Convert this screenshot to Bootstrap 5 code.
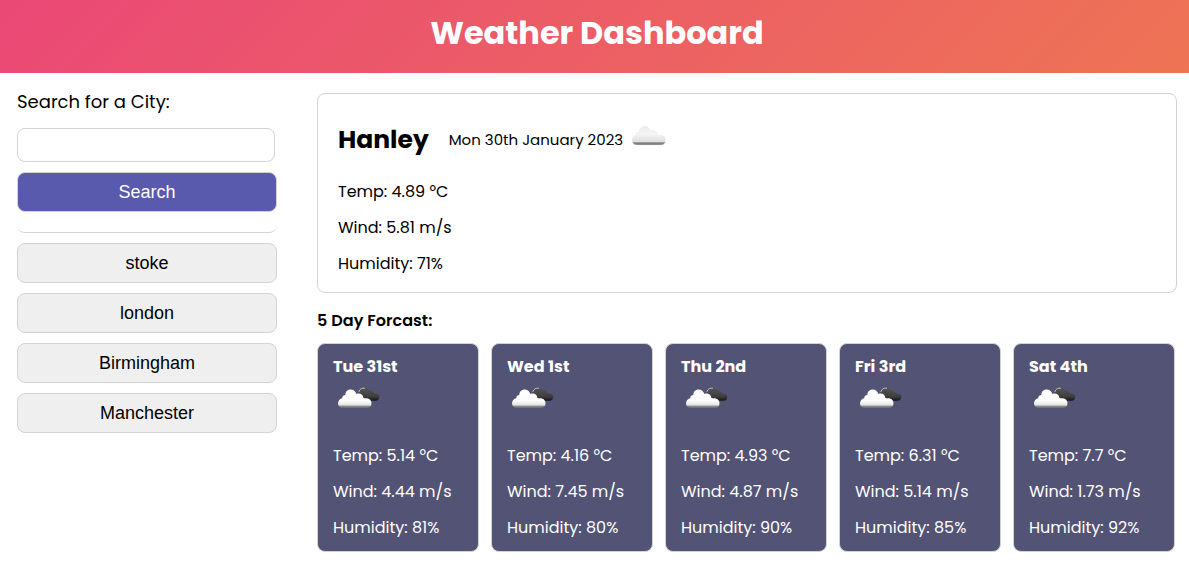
<!DOCTYPE html>
<html lang="en">
<head>
<meta charset="utf-8">
<meta name="viewport" content="width=device-width, initial-scale=1">
<title>Weather Dashboard</title>
<link href="https://cdn.jsdelivr.net/npm/bootstrap@5.3.0/dist/css/bootstrap.min.css" rel="stylesheet">
<style>
  body { font-family: Poppins, Inter, sans-serif; color: #000; background: #fff; font-size: 16px; }
  .hero { height: 73px; padding-top: 9px; background: linear-gradient(135deg, #ea4876, #ee7454); }
  .hero h1 { font-size: 32px; font-weight: 700; line-height: 48px; padding-left: 5px; }
  .layout { padding: 15px 12px 0 17px; gap: 40px; }
  .sidebar { width: 260px; }
  .search-label { font-size: 18px; font-weight: 400; line-height: 28px; margin-bottom: 12px; }
  .search-box { width: 258px; height: 34px; border: 1px solid #d3d3d3; border-radius: 8px; margin-bottom: 10px; }
  .city-btn { --bs-btn-bg: #efefef; --bs-btn-color: #000; --bs-btn-border-color: #d3d3d3; --bs-btn-border-radius: 8px;
    height: 40px; padding: 0; font: 18px/38px "Liberation Sans", Arial, sans-serif; }
  .go-btn { --bs-btn-bg: #5959ae; --bs-btn-color: #fff; }
  .city-list { gap: 10px; }
  .divider { height: 21px; border-bottom: 1px solid #d3d3d3; border-radius: 8px; margin-bottom: 10px; }
  .today { height: 200px; margin-top: 5px; padding: 28px 20px 0; border: 1px solid #d3d3d3; border-radius: 8px; }
  .today h2 { font-size: 25px; font-weight: 700; line-height: 36px; margin: 0 20px 0 0; }
  .today-date { font-size: 15px; font-weight: 400; }
  .today-icon { margin: -8px 0 0 9px; }
  .reading { line-height: 24px; margin-bottom: 12px; white-space: nowrap; }
  .readings { margin-top: 22px; }
  .forecast-title { font-size: 16px; font-weight: 600; line-height: 24px; letter-spacing: .05px; margin: 16px 0 10px; }
  .forecast { gap: 12px; }
  .day { width: 162px; height: 209px; padding: 11px 15px 0; border: 1px solid #d3d3d3; border-radius: 8px; background: #535375; color: #fff; }
  .day h4 { font-size: 16px; font-weight: 700; line-height: 24px; margin: 0 0 8px; }
  .day svg { margin: 0 0 35px 5px; }
</style>
</head>
<body>
<svg width="0" height="0" class="position-absolute" aria-hidden="true">
  <defs>
    <linearGradient id="white" x1="0" y1="0" x2="0" y2="1">
      <stop offset="0" stop-color="#fff"/><stop offset=".6" stop-color="#fdfdfd"/><stop offset=".84" stop-color="#e4e4e4"/><stop offset=".9" stop-color="#8c8c8c"/><stop offset="1" stop-color="#6c6c6c"/>
    </linearGradient>
    <linearGradient id="pale" x1="0" y1="0" x2="0" y2="1">
      <stop offset="0" stop-color="#ececec"/><stop offset=".4" stop-color="#f6f6f6"/><stop offset=".83" stop-color="#dedede"/><stop offset=".88" stop-color="#858585"/><stop offset="1" stop-color="#777"/>
    </linearGradient>
    <linearGradient id="dark" x1="0" y1="0" x2="0" y2="1">
      <stop offset="0" stop-color="#555"/><stop offset=".7" stop-color="#3d3d3d"/><stop offset="1" stop-color="#151515"/>
    </linearGradient>
    <path id="cloud" d="M5 19C2 19 0 17 0 14.500C0 11.500 2 9.700 4.300 9.200C4 7.500 5.500 6 7.300 6C7.300 2.800 9.500 .5 12.500 .5C15.500 .5 17.700 2.300 18.300 5C22 3.500 25.200 5.500 25.300 8.800C26 9.300 27 9.300 28 9.300C31.500 9.300 33.500 11.500 33.500 14.500C33.500 17.300 31.500 19 29 19Z"/>
    <symbol id="cloudy" viewBox="0 0 34 20"><use href="#cloud" fill="url(#pale)" stroke="#e0e0e0" stroke-width=".4"/></symbol>
    <symbol id="broken" viewBox="0 0 42 22">
      <path d="M21 8C20 3 23 .7 26 .7C29 .7 30 2 31 3.500C33.500 2.500 35.500 4.500 35.800 6.500C39 6 41.300 7.500 41.300 10C41.300 12.500 39.500 13.700 37.500 13.700H27Z" fill="url(#dark)"/>
      <path d="M20.800 5C21.500 2 24 .7 27 1.200" fill="none" stroke="#bbb" stroke-width="1"/>
      <use href="#cloud" y="2" fill="url(#white)"/>
    </symbol>
  </defs>
</svg>

<header class="hero text-center text-white"><h1 class="m-0">Weather Dashboard</h1></header>

<main class="layout d-flex">
  <aside class="sidebar flex-shrink-0">
    <label class="search-label d-block" for="city">Search for a City:</label>
    <input id="city" class="search-box d-block" type="text">
    <button class="btn city-btn go-btn w-100 d-block">Search</button>
    <div class="divider"></div>
    <div class="d-grid city-list">
      <button class="btn city-btn">stoke</button>
      <button class="btn city-btn">london</button>
      <button class="btn city-btn">Birmingham</button>
      <button class="btn city-btn">Manchester</button>
    </div>
  </aside>

  <div class="flex-grow-1">
    <section class="today">
      <div class="d-flex align-items-center">
        <h2>Hanley</h2><span class="today-date">Mon 30th January 2023</span>
        <svg class="today-icon" width="34" height="20"><use href="#cloudy"/></svg>
      </div>
      <div class="readings">
        <div class="reading">Temp: 4.89 °C</div>
        <div class="reading">Wind: 5.81 m/s</div>
        <div class="reading">Humidity: 71%</div>
      </div>
    </section>
    <h3 class="forecast-title">5 Day Forcast:</h3>
    <section class="forecast d-flex">
      <article class="day"><h4>Tue 31st</h4><svg class="d-block" width="42" height="22"><use href="#broken"/></svg>
        <div class="reading">Temp: 5.14 °C</div><div class="reading">Wind: 4.44 m/s</div><div class="reading">Humidity: 81%</div></article>
      <article class="day"><h4>Wed 1st</h4><svg class="d-block" width="42" height="22"><use href="#broken"/></svg>
        <div class="reading">Temp: 4.16 °C</div><div class="reading">Wind: 7.45 m/s</div><div class="reading">Humidity: 80%</div></article>
      <article class="day"><h4>Thu 2nd</h4><svg class="d-block" width="42" height="22"><use href="#broken"/></svg>
        <div class="reading">Temp: 4.93 °C</div><div class="reading">Wind: 4.87 m/s</div><div class="reading">Humidity: 90%</div></article>
      <article class="day"><h4>Fri 3rd</h4><svg class="d-block" width="42" height="22"><use href="#broken"/></svg>
        <div class="reading">Temp: 6.31 °C</div><div class="reading">Wind: 5.14 m/s</div><div class="reading">Humidity: 85%</div></article>
      <article class="day"><h4>Sat 4th</h4><svg class="d-block" width="42" height="22"><use href="#broken"/></svg>
        <div class="reading">Temp: 7.7 °C</div><div class="reading">Wind: 1.73 m/s</div><div class="reading">Humidity: 92%</div></article>
    </section>
  </div>
</main>
<script src="https://cdn.jsdelivr.net/npm/bootstrap@5.3.0/dist/js/bootstrap.bundle.min.js"></script>
</body>
</html>
